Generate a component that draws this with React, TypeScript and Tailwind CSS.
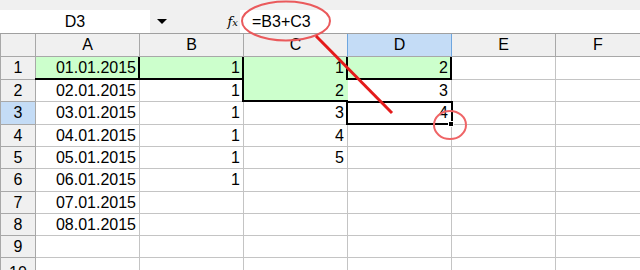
import React from "react";

const cols = ["A", "B", "C", "D", "E", "F"];
// heights include the bottom grid line
const rowH = [23, 22, 23, 22, 22, 23, 22, 22, 22, 30];

const data: Record<string, string> = {
  A1: "01.01.2015",
  A2: "02.01.2015",
  A3: "03.01.2015",
  A4: "04.01.2015",
  A5: "05.01.2015",
  A6: "06.01.2015",
  A7: "07.01.2015",
  A8: "08.01.2015",
  B1: "1",
  B2: "1",
  B3: "1",
  B4: "1",
  B5: "1",
  B6: "1",
  C1: "1",
  C2: "2",
  C3: "3",
  C4: "4",
  C5: "5",
  D1: "2",
  D2: "3",
  D3: "4",
};

const green = ["A1", "B1", "C1", "C2", "D1"];

// thick black reference borders, drawn over the grid
const thick = [
  "left-[35px] top-[78px] w-[209px] h-[2px]",
  "left-[138px] top-[57px] w-[2px] h-[23px]",
  "left-[242px] top-[57px] w-[2px] h-[45px]",
  "left-[242px] top-[100px] w-[106px] h-[2px]",
  "left-[346px] top-[57px] w-[2px] h-[23px]",
  "left-[450px] top-[57px] w-[2px] h-[23px]",
  "left-[346px] top-[78px] w-[106px] h-[2px]",
];

function Cell({ id }: { id: string }) {
  const isGreen = green.includes(id);
  const last = id.startsWith("F");
  return (
    <div
      className={`h-full flex items-center justify-end pr-[3px] border-b ${
        last ? "flex-1" : "w-[104px] border-r"
      } ${isGreen ? "bg-[#ccffcc] border-[#ccffcc]" : "border-[#c4c4c4]"}`}
    >
      {data[id]}
    </div>
  );
}

export default function App() {
  return (
    <div
      className="relative w-[640px] h-[270px] overflow-hidden bg-white text-[16px] text-black"
      style={{ fontFamily: '"Liberation Sans", Arial, sans-serif' }}
    >
      <div className="h-[10px] bg-[#f0f0f0]" />

      {/* formula bar */}
      <div className="flex h-[23px] bg-[#f0f0f0]">
        <div className="w-[150px] bg-white flex items-center justify-center">D3</div>
        <div className="w-[90px] flex items-center">
          <div className="ml-[7px] w-0 h-0 border-l-[5px] border-r-[5px] border-t-[5px] border-l-transparent border-r-transparent border-t-black" />
          <span
            className="ml-auto mr-[2px] italic text-[13px] leading-none"
            style={{ fontFamily: '"DejaVu Serif", serif' }}
          >
            f<span className="text-[10px]">x</span>
          </span>
        </div>
        <div className="flex-1 bg-white flex items-center pl-[12px]">=B3+C3</div>
      </div>

      {/* column headers */}
      <div className="flex h-[24px] border-t border-[#a0a0a0] bg-[#f0f0f0]">
        <div className="w-[36px] border-l border-r border-b border-[#a8a8a8]" />
        {cols.map((c) => (
          <div
            key={c}
            className={`flex items-center justify-center border-b border-[#a8a8a8] ${
              c === "F" ? "flex-1" : "w-[104px] border-r"
            } ${c === "C" ? "border-r-[#6ea6df]" : ""} ${
              c === "D" ? "bg-[#c4dcf6] border-r-[#6ea6df]" : ""
            }`}
          >
            {c}
          </div>
        ))}
      </div>

      {/* rows */}
      {rowH.map((h, i) => {
        const r = i + 1;
        return (
          <div key={r} className="flex" style={{ height: h }}>
            <div
              className={`w-[36px] flex items-center justify-center border-l border-r border-b border-[#a8a8a8] ${
                r === 3 ? "bg-[#c4dcf6]" : "bg-[#f0f0f0]"
              }`}
            >
              {r}
            </div>
            {cols.map((c) => (
              <Cell key={c + r} id={c + r} />
            ))}
          </div>
        );
      })}

      {thick.map((t) => (
        <div key={t} className={`absolute bg-black ${t}`} />
      ))}
      {/* selected cell D3 with fill handle */}
      <div className="absolute left-[346px] top-[101px] w-[107px] h-[24px] border-2 border-black" />
      <div className="absolute left-[448px] top-[121px] w-[6px] h-[6px] bg-black border border-white" />

      {/* red annotations */}
      <svg className="absolute left-0 top-0 pointer-events-none" width="640" height="270">
        <ellipse cx="286" cy="21" rx="44" ry="19.5" fill="none" stroke="#ea5a5c" strokeWidth="2" />
        <line x1="316" y1="36" x2="392" y2="113" stroke="#e41b1b" strokeWidth="3" />
        <ellipse cx="450" cy="125" rx="16" ry="14" fill="none" stroke="#ef6466" strokeWidth="2" />
      </svg>
    </div>
  );
}
